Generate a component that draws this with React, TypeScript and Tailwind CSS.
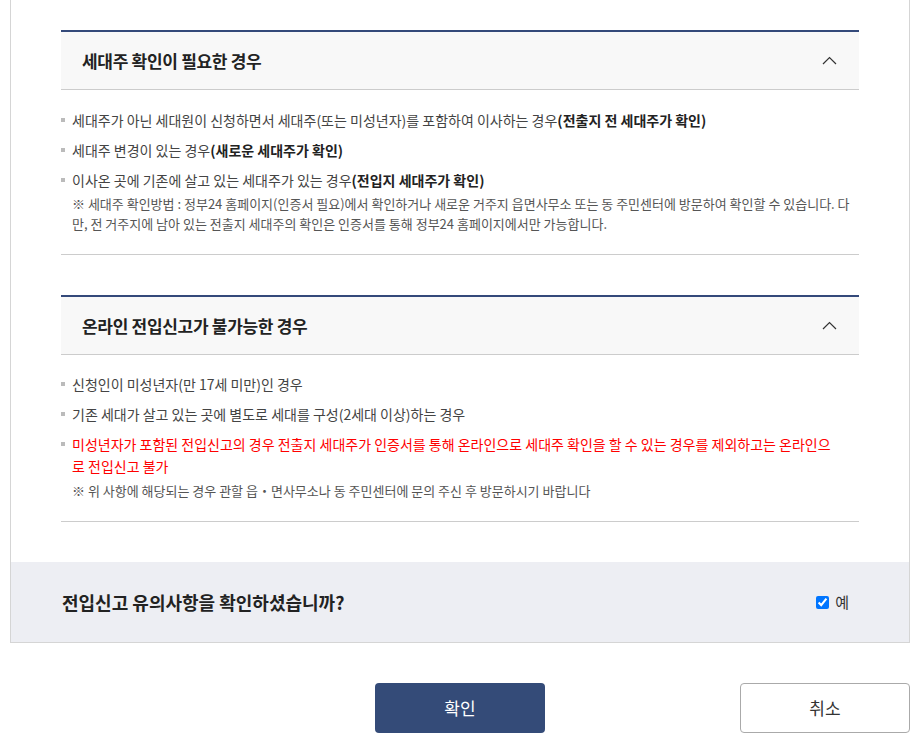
import React from 'react';

const FONT = { fontFamily: '"Noto Sans CJK KR", "Noto Sans", sans-serif' };

function ChevronUp() {
  return (
    <svg width="15" height="9" viewBox="0 0 15 9" fill="none" className="block">
      <polyline points="1,8 7.5,1.5 14,8" stroke="#333" strokeWidth="1.2" fill="none" />
    </svg>
  );
}

function Bullet({ children, className = '' }: { children: React.ReactNode; className?: string }) {
  return (
    <li className={`relative pl-[11px] leading-[22px] ${className}`}>
      <span className="absolute left-0 top-[9px] w-[4px] h-[4px] bg-[#bbb]" />
      {children}
    </li>
  );
}

function Section({ title, pt = 'pt-[19px]', children }: { title: string; pt?: string; children: React.ReactNode }) {
  return (
    <div className="border-b border-[#ccc]">
      <div className="flex items-center justify-between h-[60px] bg-[#f8f8f8] border-t-2 border-t-[#34497a] border-b border-b-[#ccc] pl-[21px] pr-[22px]">
        <h3 className="text-[17px] font-bold text-[#222] tracking-[-0.3px]">{title}</h3>
        <ChevronUp />
      </div>
      <div className={`${pt} pb-[20px] text-[14px] text-[#444]`}>{children}</div>
    </div>
  );
}

export default function App() {
  return (
    <div className="bg-white w-[918px] h-[746px] overflow-hidden" style={FONT}>
      <div className="w-[900px] ml-[10px] border-x border-b border-[#d5d5d5]">
        <div className="px-[50px] pt-[30px] pb-[40px]">
          <Section title="세대주 확인이 필요한 경우">
            <ul className="flex flex-col gap-[8px]">
              <Bullet>
                세대주가 아닌 세대원이 신청하면서 세대주(또는 미성년자)를 포함하여 이사하는 경우
                <b className="text-[#222]">(전출지 전 세대주가 확인)</b>
              </Bullet>
              <Bullet>
                세대주 변경이 있는 경우<b className="text-[#222]">(새로운 세대주가 확인)</b>
              </Bullet>
              <Bullet>
                이사온 곳에 기존에 살고 있는 세대주가 있는 경우<b className="text-[#222]">(전입지 세대주가 확인)</b>
              </Bullet>
            </ul>
            <p className="mt-[3px] pl-[11px] text-[13px] leading-[20px] text-[#555]">
              ※ 세대주 확인방법 : 정부24 홈페이지(인증서 필요)에서 확인하거나 새로운 거주지 읍면사무소 또는 동 주민센터에 방문하여 확인할 수 있습니다. 다
              <br />
              만, 전 거주지에 남아 있는 전출지 세대주의 확인은 인증서를 통해 정부24 홈페이지에서만 가능합니다.
            </p>
          </Section>

          <div className="mt-[40px]">
            <Section title="온라인 전입신고가 불가능한 경우" pt="pt-[18px]">
              <ul className="flex flex-col gap-[8px]">
                <Bullet>신청인이 미성년자(만 17세 미만)인 경우</Bullet>
                <Bullet>기존 세대가 살고 있는 곳에 별도로 세대를 구성(2세대 이상)하는 경우</Bullet>
                <Bullet className="text-[#ff0000]">
                  미성년자가 포함된 전입신고의 경우 전출지 세대주가 인증서를 통해 온라인으로 세대주 확인을 할 수 있는 경우를 제외하고는 온라인으
                  <br />
                  로 전입신고 불가
                </Bullet>
              </ul>
              <p className="mt-[4px] pl-[11px] text-[13px] leading-[20px] text-[#555]">
                ※ 위 사항에 해당되는 경우 관할 읍・면사무소나 동 주민센터에 문의 주신 후 방문하시기 바랍니다
              </p>
            </Section>
          </div>
        </div>

        <div className="flex items-center justify-between h-[80px] bg-[#edeef3] pl-[51px] pr-[60px]">
          <p className="text-[18px] font-bold text-[#222]">전입신고 유의사항을 확인하셨습니까?</p>
          <label className="flex items-center gap-[6px] text-[15px] text-[#333]">
            <input type="checkbox" checked readOnly className="w-[13px] h-[13px] m-0 accent-[#0075ff]" />
            예
          </label>
        </div>
      </div>

      <div className="w-[900px] ml-[10px] mt-[40px] grid grid-cols-[1fr_170px_1fr]">
        <div />
        <button className="h-[50px] rounded-[4px] bg-[#344b78] text-white text-[17px]">확인</button>
        <div className="flex justify-end">
          <button className="w-[170px] h-[50px] rounded-[4px] border border-[#aaa] bg-white text-[#333] text-[17px]">
            취소
          </button>
        </div>
      </div>
    </div>
  );
}
